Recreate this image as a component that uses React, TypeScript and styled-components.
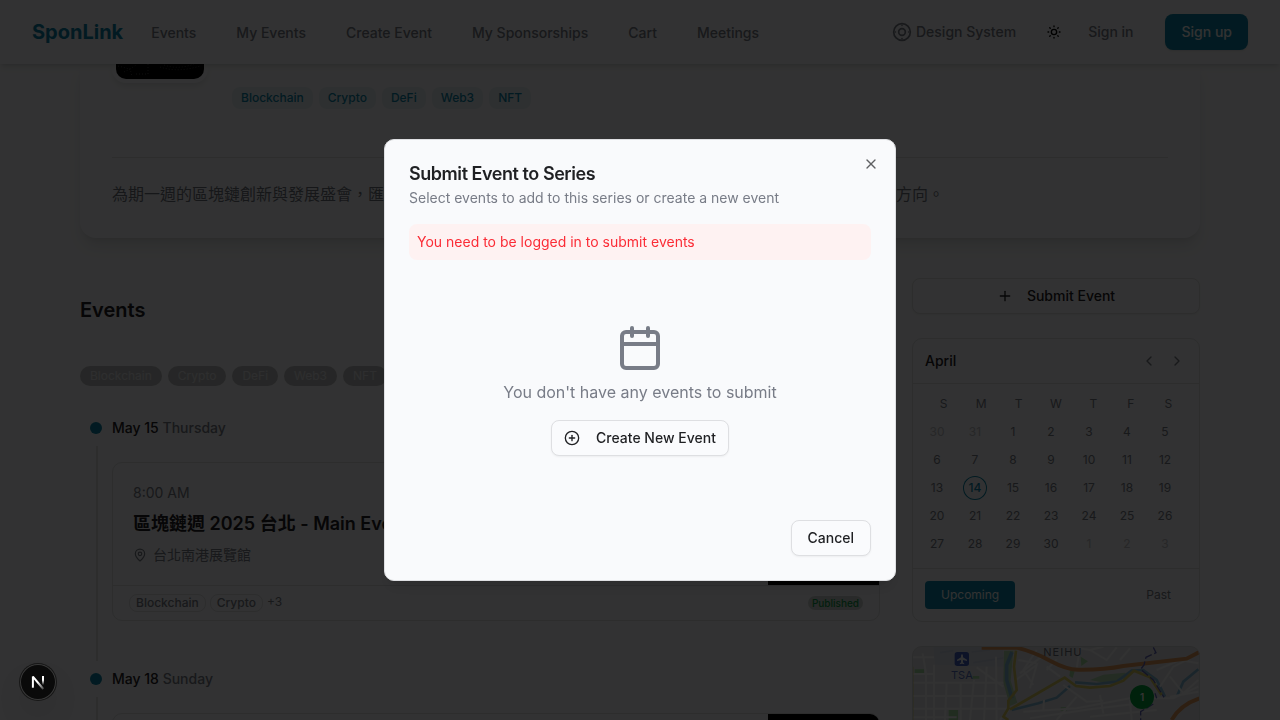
import React from "react";
import styled, { createGlobalStyle, css } from "styled-components";
import { Calendar, ChevronLeft, ChevronRight, CirclePlus, MapPin, Plus, SunMedium, X } from "lucide-react";

const c = {
  bg: "#f9fafc",
  surface: "#fafbfd",
  text: "#1f2023",
  muted: "#787c87",
  border: "#dedfe2",
  primary: "#0a84a8",
};

const GlobalStyle = createGlobalStyle`
  *, *::before, *::after { box-sizing: border-box; }
  html, body { margin: 0; height: 720px; overflow: hidden; }
  body {
    background: ${c.bg};
    color: ${c.text};
    font-family: Inter, "Noto Sans CJK TC", sans-serif;
    font-size: 14px;
    line-height: 20px;
  }
  h1, h2, h3, p { margin: 0; }
  button { font: inherit; color: inherit; cursor: pointer; }
`;

const Page = styled.div`
  height: 720px;
  overflow: hidden;
  display: flex;
  flex-direction: column;
`;

const Header = styled.header`
  flex: none;
  height: 64px;
  padding: 0 32px;
  display: flex;
  align-items: center;
  background: ${c.bg};
  box-shadow: 0 4px 6px -1px rgba(0, 0, 0, 0.1), 0 2px 4px -2px rgba(0, 0, 0, 0.1);
  z-index: 1;
`;

const Logo = styled.span`
  font-size: 20px;
  line-height: 28px;
  font-weight: 700;
  color: ${c.primary};
`;

const Nav = styled.nav`
  display: flex;
  gap: 40px;
  margin-left: 28px;
  padding-top: 2px;
  flex: 1;
`;

const NavLink = styled.a`
  font-weight: 500;
  color: ${c.muted};
  white-space: nowrap;
`;

const HeaderActions = styled.div`
  display: flex;
  align-items: center;
`;

const DesignLink = styled(NavLink)`
  display: flex;
  align-items: center;
  gap: 4px;
`;

const ThemeToggle = styled.span`
  display: flex;
  margin: 0 26px 0 30px;
  color: #000;
`;

const SignUp = styled.button`
  height: 36px;
  margin-left: 31.5px;
  padding: 0 16px 0 16.5px;
  border: 0;
  border-radius: 8px;
  background: ${c.primary};
  color: #fafafa;
  font-weight: 500;
  box-shadow: 0 1px 2px rgba(0, 0, 0, 0.1);
`;

const Main = styled.main`
  width: 1120px;
  margin: 0 auto;
`;

const Hero = styled.section`
  height: 174px;
  padding: 0 32px;
  border-radius: 0 0 16px 16px;
  background: ${c.surface};
  box-shadow: 0 10px 15px -3px rgba(0, 0, 0, 0.1), 0 4px 6px -4px rgba(0, 0, 0, 0.1);
`;

const HeroTop = styled.div`
  height: 94px;
  display: flex;
  align-items: flex-start;
  gap: 24px;
  border-bottom: 1px solid ${c.border};
`;

const HeroImage = styled.div`
  width: 96px;
  height: 19px;
  border: 4px solid ${c.surface};
  border-top: 0;
  border-radius: 0 0 14px 14px;
  background: #000;
  box-shadow: 0 4px 6px -1px rgba(0, 0, 0, 0.1);
`;

const HeroTags = styled.div`
  display: flex;
  gap: 6px;
  padding-top: 23px;
`;

const HeroTag = styled.span`
  height: 22px;
  padding: 0 9px;
  border-radius: 8px;
  background: #e6eff3;
  color: ${c.primary};
  font-size: 12px;
  line-height: 22px;
  font-weight: 500;
`;

const HeroText = styled.p`
  padding-top: 23px;
  font-size: 16px;
  line-height: 26px;
  color: #71757f;
  white-space: nowrap;
`;

const Columns = styled.div`
  display: grid;
  grid-template-columns: 800px 288px;
  gap: 32px;
  margin-top: 40px;
`;

const SectionTitle = styled.h2`
  padding-top: 18px;
  font-size: 20px;
  line-height: 28px;
  font-weight: 600;
`;

const Filters = styled.div`
  display: flex;
  gap: 6px;
  margin: 42px 0 32px;
`;

const Filter = styled.span`
  height: 20px;
  padding: 0 10px;
  border-radius: 10px;
  background: #bebfc1;
  color: #e6e7ea;
  font-size: 12px;
  line-height: 20px;
  font-weight: 400;
`;

const DayHeader = styled.div`
  display: flex;
  align-items: center;
  gap: 10px;
  height: 20px;
  padding-left: 10px;
  font-weight: 500;
`;

const Dot = styled.span`
  width: 12px;
  height: 12px;
  border-radius: 50%;
  background: ${c.primary};
`;

const Weekday = styled.span`
  color: ${c.muted};
`;

const DayBody = styled.div`
  margin: 8px 0 8px 16px;
  padding: 16px 0 40px 14px;
  border-left: 2px solid ${c.border};
`;

const EventCard = styled.article`
  border: 1px solid ${c.border};
  border-radius: 10px;
  overflow: hidden;
`;

const EventMain = styled.div`
  display: flex;
  height: 122px;
`;

const EventInfo = styled.div`
  flex: 1;
  padding: 20px;
  color: ${c.muted};
`;

const EventTitle = styled.h3`
  margin: 7px 0;
  font-size: 18px;
  line-height: 28px;
  font-weight: 600;
  color: ${c.text};
`;

const Place = styled.div`
  display: flex;
  align-items: center;
  gap: 6px;
`;

const EventImage = styled.div`
  width: 111px;
  background: #000;
`;

const EventFooter = styled.div`
  display: flex;
  align-items: center;
  gap: 4px;
  height: 35px;
  padding: 0 16px;
  border-top: 1px solid ${c.border};
  font-size: 12px;
  color: ${c.muted};
`;

const MiniTag = styled.span`
  height: 18px;
  padding: 0 6px;
  border: 1px solid ${c.border};
  border-radius: 8px;
  line-height: 16px;
  font-weight: 500;
`;

const More = styled.span`
  height: 20px;
  line-height: 18px;
  flex: 1;
`;

const Status = styled.span`
  height: 14px;
  padding: 0 4px;
  border-radius: 7px;
  background: #cdd3d0;
  color: #0c9a47;
  font-size: 10px;
  line-height: 14px;
  font-weight: 500;
`;

const Sidebar = styled.aside`
  display: flex;
  flex-direction: column;
  gap: 24px;
`;

const outlined = css`
  display: flex;
  align-items: center;
  justify-content: center;
  height: 36px;
  border: 1px solid ${c.border};
  border-radius: 8px;
  background: ${c.surface};
  font-weight: 500;
  box-shadow: 0 1px 2px rgba(0, 0, 0, 0.05);
`;

const OutlineButton = styled.button<{ $pad: number; $gap?: number }>`
  ${outlined}
  gap: ${(p) => p.$gap ?? 16}px;
  padding: 0 ${(p) => p.$pad}px;
`;

const CalendarCard = styled.section`
  border: 1px solid ${c.border};
  border-radius: 10px;
`;

const CalendarHead = styled.div`
  display: flex;
  justify-content: space-between;
  padding: 12px;
  font-weight: 500;
  border-bottom: 1px solid ${c.border};
`;

const MonthNav = styled.div`
  display: flex;
  gap: 8px;
  color: ${c.muted};
`;

const MonthButton = styled.span`
  width: 20px;
  height: 20px;
  display: grid;
  place-items: center;
`;

const CalendarBody = styled.div`
  padding: 12px;
  font-size: 12px;
`;

const WeekRow = styled.div`
  display: grid;
  grid-template-columns: repeat(7, 1fr);
  margin-bottom: 8px;
  line-height: 16px;
  text-align: center;
  color: ${c.muted};
`;

const Days = styled.div`
  display: grid;
  grid-template-columns: repeat(7, 1fr);
  gap: 4px;
`;

const Day = styled.span<{ $outside?: boolean; $today?: boolean }>`
  width: 24px;
  height: 24px;
  border-radius: 50%;
  line-height: 24px;
  text-align: center;
  color: ${(p) => (p.$today ? c.primary : p.$outside ? "#c0c2c7" : c.muted)};
  font-weight: ${(p) => (p.$today ? 500 : 400)};
  box-shadow: ${(p) => (p.$today ? `inset 0 0 0 1px ${c.primary}` : "none")};
`;

const CalendarFoot = styled.div`
  display: flex;
  justify-content: space-between;
  padding: 12px;
  border-top: 1px solid ${c.border};
`;

const Tab = styled.button<{ $active?: boolean }>`
  height: 28px;
  padding: 0 16px;
  border: 0;
  border-radius: 4px;
  font-size: 12px;
  background: ${(p) => (p.$active ? c.primary : "transparent")};
  color: ${(p) => (p.$active ? "#fafafa" : c.muted)};
`;

const MapCard = styled.section`
  height: 220px;
  border-radius: 10px;
  overflow: hidden;
  background: #e4e5e7;
`;

const Overlay = styled.div`
  position: fixed;
  inset: 0;
  z-index: 10;
  display: grid;
  place-items: center;
  background: rgba(0, 0, 0, 0.8);
`;

const Dialog = styled.div`
  position: relative;
  width: 512px;
  height: 442px;
  padding: 24px;
  display: flex;
  flex-direction: column;
  gap: 16px;
  border: 1px solid ${c.border};
  border-radius: 10px;
  background: ${c.bg};
  box-shadow: 0 10px 15px -3px rgba(0, 0, 0, 0.1), 0 4px 6px -4px rgba(0, 0, 0, 0.1);
`;

const DialogHead = styled.div`
  display: flex;
  flex-direction: column;
  gap: 4px;
  color: ${c.muted};
`;

const DialogTitle = styled.h2`
  font-size: 18px;
  line-height: 20px;
  font-weight: 600;
  letter-spacing: -0.45px;
  color: ${c.text};
`;

const Close = styled.button`
  position: absolute;
  top: 16px;
  right: 16px;
  display: flex;
  padding: 0;
  border: 0;
  background: none;
  opacity: 0.7;
`;

const Alert = styled.p`
  padding: 8px;
  border-radius: 8px;
  background: #fef2f2;
  color: #fb2c36;
`;

const Empty = styled.div`
  flex: 1;
  display: flex;
  flex-direction: column;
  align-items: center;
  padding: 48px 0;
  color: ${c.muted};
`;

const EmptyText = styled.p`
  margin: 8px 0 16px;
  font-size: 16px;
  line-height: 24px;
`;

const EmptyButton = styled(OutlineButton)`
  color: ${c.text};
`;

const DialogFoot = styled.div`
  display: flex;
  justify-content: flex-end;
`;

const DevBadge = styled.div`
  position: fixed;
  left: 20px;
  bottom: 20px;
  z-index: 20;
  width: 36px;
  height: 36px;
  display: grid;
  place-items: center;
  border-radius: 50%;
  background: #0a0a0a;
  box-shadow: 0 0 0 1px #171717, inset 0 0 0 1px #3a3a3a, 0 16px 32px -8px rgba(0, 0, 0, 0.24);
`;

const TargetIcon = () => (
  <svg width="20" height="20" viewBox="0 0 24 24" fill="none" stroke="currentColor" strokeWidth="2" strokeLinecap="round">
    <circle cx="12" cy="12" r="10" />
    <circle cx="12" cy="12" r="4" />
    <path d="M12 4v.01M12 20v.01M4 12h.01M20 12h.01" />
  </svg>
);

const NextMark = () => (
  <svg width="14" height="16" viewBox="0 0 14 16" fill="none">
    <defs>
      <linearGradient id="stem" x1="0" y1="1" x2="0" y2="11" gradientUnits="userSpaceOnUse">
        <stop offset="0.5" stopColor="#fff" />
        <stop offset="1" stopColor="#fff" stopOpacity="0" />
      </linearGradient>
      <linearGradient id="slash" x1="7" y1="8" x2="13" y2="15" gradientUnits="userSpaceOnUse">
        <stop stopColor="#fff" />
        <stop offset="1" stopColor="#fff" stopOpacity="0.2" />
      </linearGradient>
    </defs>
    <path d="M1.9 13.8V2.6L12.3 15" stroke="url(#slash)" strokeWidth="2" strokeLinejoin="bevel" />
    <path d="M12 2v10" stroke="url(#stem)" strokeWidth="2" />
  </svg>
);

const NetworkPattern = () => (
  <svg width="88" height="15" viewBox="0 0 88 15" fill="none" stroke="#777" strokeWidth="0.6" strokeDasharray="1 2">
    <path d="M2 2L14 5 20 1M8 8L14 5 16 12M32 0V10H20M44 3Q62 9 84 2M48 1Q62 6 78 0" />
  </svg>
);

const MapDrawing = () => (
  <svg width="288" height="74" viewBox="66 48 864 222" fill="none">
    <path d="M66 48h864v222H66z" fill="#e6e7e9" />
    <path d="M130 48H340V110L230 108 135 104z" fill="#dcdfe9" />
    <path d="M150 68L190 62M245 66L300 60M250 98L340 84" stroke="#ced4e6" strokeWidth="5" />
    <path d="M342 62h28l-8 90 20 66-22 10-20-70z" fill="#b2dcae" />
    <path d="M74 118h28v13H74zM176 240h28v30h-28zM572 80l22 14-20 14zM512 232h18v10h-18zM248 138h20v8h-20zM540 122l14 2-6 20-10-6z" fill="#a6dda0" />
    <path d="M600 150L640 134 705 128 712 144 650 160z" fill="#b2dcae" />
    <path d="M366 66L350 105 350 150 366 205" stroke="#84bad8" strokeWidth="11" />
    <path d="M365 240L445 220 500 203 540 168M555 157L620 162 680 155 725 122 760 120 800 150 825 200M860 200L880 155 925 118" stroke="#84bad8" strokeWidth="8" />
    <g stroke="#f8f8fa" strokeWidth="6">
      <path d="M132 104V270M98 70L108 130V270M66 82H132M66 158H340M66 198H350M66 236H350M66 262H200M170 158L165 270M212 156V270M252 150L240 270M290 110L282 270M318 80L320 270M66 132H132M260 112L340 170M355 240L330 270" />
      <path d="M385 90L440 100M390 130L455 80M378 150L440 105 420 175M440 60L400 120 430 165M462 210L460 240M470 110L510 140M500 88L470 120M560 115L570 55 600 60 650 90 680 52M600 60L640 50M690 90L720 55M630 195L640 250M560 200L500 270M520 165L590 215 640 212" />
      <path d="M400 245L560 235 720 205 850 205 925 170M420 265L600 238 790 215M720 210L725 270M840 140L880 190 925 150M800 120L870 90 925 100M810 170L850 110 900 85M840 200L925 185M600 260L800 240" />
    </g>
    <path d="M355 270L340 260 355 235 355 212 380 180 372 110 378 62M360 238L524 143 558 168 600 173 660 168 700 152 732 122 780 142 815 195" stroke="#dccb60" strokeWidth="8" />
    <path d="M69 110V270" stroke="#dccb60" strokeWidth="2" />
    <path d="M275 53H380Q430 65 480 92T565 119Q640 120 700 108L890 86 928 66M845 270Q870 225 928 205" stroke="#e59b5c" strokeWidth="12" />
    <path d="M790 52L798 68 768 82 762 105 752 118 790 150 822 202M795 190L800 205M790 222L752 245V270" stroke="#6266b8" strokeWidth="4" strokeDasharray="24 8" />
    <rect x="194" y="66" width="43" height="42" rx="8" fill="#4060c0" />
    <path d="M216 73c3 0 3 4 3 9l12 7v4l-12-3v7l4 4v2l-7-2-7 2v-2l4-4v-7l-12 3v-4l12-7c0-5 0-9 3-9z" fill="#f0f2fa" />
    <g fontFamily="Inter, sans-serif">
      <text x="183" y="146" fontSize="33" fill="#5570be">TSA</text>
      <text x="460" y="77" fontSize="33" letterSpacing="3" fill="#6a6e78">NEIHU</text>
    </g>
    <circle cx="756" cy="201" r="36" fill="#00a63e" />
    <text x="756" y="212" fontSize="30" fontWeight="600" fontFamily="Inter, sans-serif" fill="#fff" textAnchor="middle">1</text>
    <rect x="67.5" y="49.5" width="861" height="660" rx="27" stroke="#d8dadd" strokeWidth="3" />
  </svg>
);

const tags = ["Blockchain", "Crypto", "DeFi", "Web3", "NFT"];
const navItems = ["Events", "My Events", "Create Event", "My Sponsorships", "Cart", "Meetings"];
const days = Array.from({ length: 35 }, (_, i) => ({
  label: i < 2 ? 30 + i : i < 32 ? i - 1 : i - 31,
  outside: i < 2 || i > 31,
}));

function DayGroup({ date, weekday, title }: { date: string; weekday: string; title: string }) {
  return (
    <section>
      <DayHeader>
        <Dot />
        <span>
          {date} <Weekday>{weekday}</Weekday>
        </span>
      </DayHeader>
      <DayBody>
        <EventCard>
          <EventMain>
            <EventInfo>
              <div>8:00 AM</div>
              <EventTitle>{title}</EventTitle>
              <Place>
                <MapPin size={14} />
                台北南港展覽館
              </Place>
            </EventInfo>
            <EventImage />
          </EventMain>
          <EventFooter>
            <MiniTag>Blockchain</MiniTag>
            <MiniTag>Crypto</MiniTag>
            <More>+3</More>
            <Status>Published</Status>
          </EventFooter>
        </EventCard>
      </DayBody>
    </section>
  );
}

export default function App() {
  return (
    <>
      <GlobalStyle />
      <Page>
        <Header>
          <Logo>SponLink</Logo>
          <Nav>
            {navItems.map((n) => (
              <NavLink key={n}>{n}</NavLink>
            ))}
          </Nav>
          <HeaderActions>
            <DesignLink>
              <TargetIcon />
              Design System
            </DesignLink>
            <ThemeToggle>
              <SunMedium size={16} />
            </ThemeToggle>
            <NavLink>Sign in</NavLink>
            <SignUp>Sign up</SignUp>
          </HeaderActions>
        </Header>
        <Main>
          <Hero>
            <HeroTop>
              <HeroImage>
                <NetworkPattern />
              </HeroImage>
              <HeroTags>
                {tags.map((t) => (
                  <HeroTag key={t}>{t}</HeroTag>
                ))}
              </HeroTags>
            </HeroTop>
            <HeroText>為期一週的區塊鏈創新與發展盛會，匯聚全球頂尖區塊鏈專家、企業與投資者，共同探討區塊鏈技術的未來發展方向。</HeroText>
          </Hero>
          <Columns>
            <div>
              <SectionTitle>Events</SectionTitle>
              <Filters>
                {tags.map((t) => (
                  <Filter key={t}>{t}</Filter>
                ))}
              </Filters>
              <DayGroup date="May 15" weekday="Thursday" title="區塊鏈週 2025 台北 - Main Event" />
              <DayGroup date="May 18" weekday="Sunday" title="區塊鏈週 2025 台北" />
            </div>
            <Sidebar>
              <OutlineButton $pad={16} $gap={14}>
                <Plus size={16} />
                Submit Event
              </OutlineButton>
              <CalendarCard>
                <CalendarHead>
                  April
                  <MonthNav>
                    <MonthButton>
                      <ChevronLeft size={16} />
                    </MonthButton>
                    <MonthButton>
                      <ChevronRight size={16} />
                    </MonthButton>
                  </MonthNav>
                </CalendarHead>
                <CalendarBody>
                  <WeekRow>
                    {["S", "M", "T", "W", "T", "F", "S"].map((d, i) => (
                      <span key={i}>{d}</span>
                    ))}
                  </WeekRow>
                  <Days>
                    {days.map((d, i) => (
                      <Day key={i} $outside={d.outside} $today={d.label === 14}>
                        {d.label}
                      </Day>
                    ))}
                  </Days>
                </CalendarBody>
                <CalendarFoot>
                  <Tab $active>Upcoming</Tab>
                  <Tab>Past</Tab>
                </CalendarFoot>
              </CalendarCard>
              <MapCard>
                <MapDrawing />
              </MapCard>
            </Sidebar>
          </Columns>
        </Main>
      </Page>
      <Overlay>
        <Dialog role="dialog">
          <DialogHead>
            <DialogTitle>Submit Event to Series</DialogTitle>
            <p>Select events to add to this series or create a new event</p>
          </DialogHead>
          <Alert>You need to be logged in to submit events</Alert>
          <Empty>
            <Calendar size={48} />
            <EmptyText>You don't have any events to submit</EmptyText>
            <EmptyButton $pad={12}>
              <CirclePlus size={16} />
              Create New Event
            </EmptyButton>
          </Empty>
          <DialogFoot>
            <OutlineButton $pad={16}>Cancel</OutlineButton>
          </DialogFoot>
          <Close aria-label="Close">
            <X size={16} />
          </Close>
        </Dialog>
      </Overlay>
      <DevBadge>
        <NextMark />
      </DevBadge>
    </>
  );
}
